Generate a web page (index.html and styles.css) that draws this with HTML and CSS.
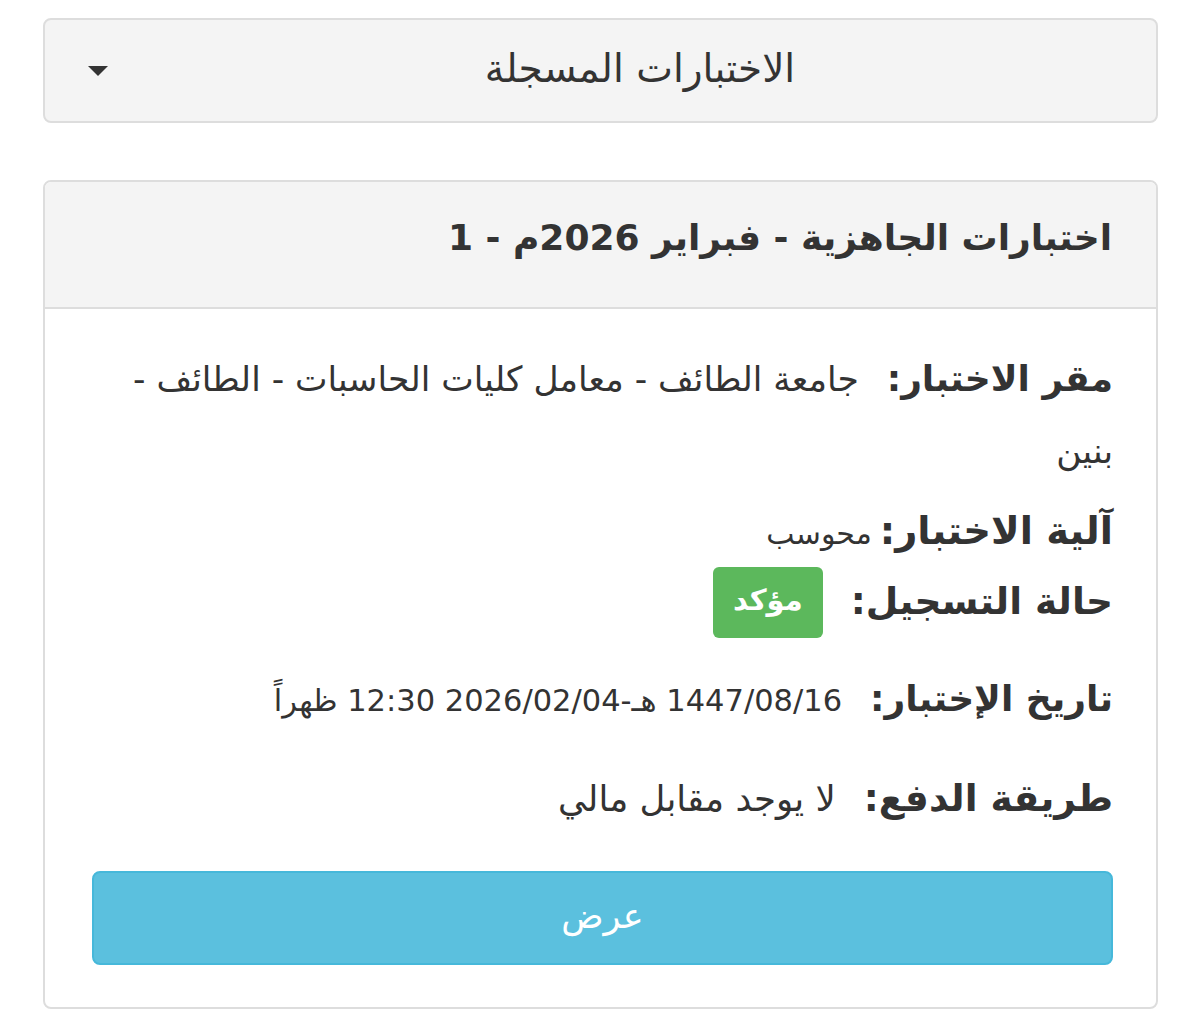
FILE: index.html
```html
<!DOCTYPE html>
<html lang="ar" dir="rtl">
<head>
<meta charset="utf-8">
<link rel="stylesheet" href="styles.css">
</head>
<body>
<div class="page">
  <div class="dropdown">
    <span class="dropdown-text">الاختبارات المسجلة</span>
    <span class="caret"></span>
  </div>

  <div class="card">
    <div class="card-header">
      <h2 class="card-title">اختبارات الجاهزية - فبراير 2026م - 1</h2>
    </div>
    <div class="card-body">
      <div class="row row-place"><span class="label">مقر الاختبار:</span><span class="value value-place">جامعة الطائف - معامل كليات الحاسبات - الطائف - بنين</span></div>
      <div class="row row-mode"><span class="label label-mode">آلية الاختبار:</span><span class="value value-mode">محوسب</span></div>
      <div class="row row-status"><span class="label label-status">حالة التسجيل:</span><span class="badge">مؤكد</span></div>
      <div class="row row-date"><span class="label">تاريخ الإختبار:</span><span class="value value-date">1447/08/16 هـ-2026/02/04 12:30 ظهراً</span></div>
      <div class="row row-pay"><span class="label label-pay">طريقة الدفع:</span><span class="value value-pay">لا يوجد مقابل مالي</span></div>
      <button class="btn-view">عرض</button>
    </div>
  </div>
</div>
</body>
</html>
```
FILE: styles.css
```css
html, body {
  margin: 0;
  padding: 0;
  background: #ffffff;
}
body {
  font-family: "DejaVu Sans", sans-serif;
  color: #333333;
}
.page {
  padding: 18px 42px 0 43px;
}
.dropdown {
  height: 101px;
  border: 2px solid #dddddd;
  border-radius: 8px;
  background: #f4f4f4;
  display: flex;
  align-items: center;
  direction: rtl;
}
.dropdown-text {
  flex: 1;
  text-align: center;
  font-size: 39px;
  line-height: 1;
  padding-bottom: 4px;
  font-weight: normal;
  color: #333;
}
.caret {
  width: 0;
  height: 0;
  border-top: 10px solid #333;
  border-left: 10px solid transparent;
  border-right: 10px solid transparent;
  margin-left: 43px;
  margin-right: 16px;
}
.card {
  margin-top: 57px;
  border: 2px solid #dddddd;
  border-radius: 8px;
  background: #fff;
  overflow: hidden;
}
.card-header {
  height: 127px;
  box-sizing: border-box;
  background: #f4f4f4;
  border-bottom: 2px solid #dddddd;
  display: flex;
  align-items: center;
  padding: 0 44px 14px;
}
.card-title {
  margin: 0;
  font-size: 36px;
  line-height: 1;
  font-weight: bold;
  color: #333;
}
.card-body {
  padding: 34px 43px 42px 47px;
}
.row {
  font-size: 36px;
  line-height: 72px;
}
.label {
  font-size: 36px;
  line-height: 1;
  font-weight: bold;
  color: #333;
  margin-left: 28px;
}
.label-mode {
  font-size: 38.5px;
  margin-left: 8px;
}
.label-status {
  font-size: 37.5px;
}
.label-pay {
  font-size: 37.5px;
}
.value {
  font-size: 30px;
  line-height: 1;
  font-weight: normal;
  color: #333;
}
.value-place {
  font-size: 34.5px;
}
.value-mode {
  font-size: 30px;
}
.value-date {
  font-size: 30.5px;
}
.value-pay {
  font-size: 35.5px;
}
.row-mode {
  margin-top: 9px;
}
.row-status {
  display: flex;
  align-items: center;
  height: 72px;
  margin-top: -2px;
}
.badge {
  display: inline-flex;
  align-items: center;
  justify-content: center;
  width: 110px;
  height: 71px;
  background: #5cb85c;
  color: #fff;
  border-radius: 6px;
  font-size: 29px;
  font-weight: bold;
  line-height: 1;
  padding-bottom: 4px;
  box-sizing: border-box;
}
.row-date {
  margin-top: 25px;
}
.row-pay {
  margin-top: 28px;
}
.btn-view {
  display: block;
  width: 100%;
  height: 94px;
  margin-top: 36px;
  background: #5bc0de;
  border: 2px solid #46b8da;
  border-radius: 8px;
  color: #fff;
  font-family: "DejaVu Sans", sans-serif;
  font-size: 35px;
  padding-bottom: 6px;
  cursor: pointer;
}
```
